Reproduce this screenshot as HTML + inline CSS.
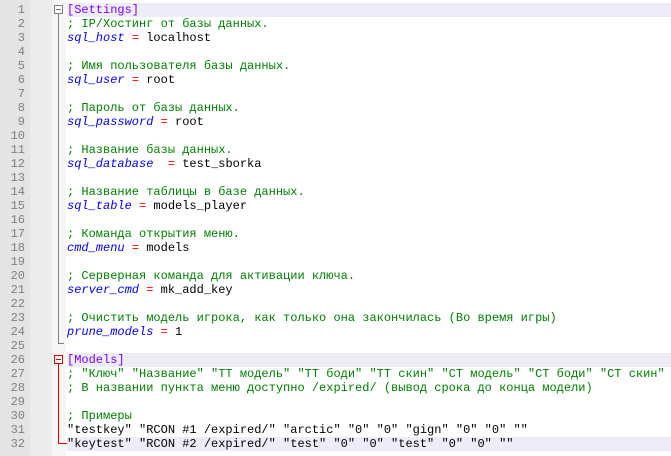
<!DOCTYPE html>
<html><head><meta charset="utf-8"><style>
body{margin:0;width:671px;height:456px;overflow:hidden;background:#fff;position:relative;font-family:"Liberation Mono","DejaVu Sans Mono",monospace;font-size:12px}
#ln{position:absolute;left:0;top:0;width:30px;height:456px;background:#e4e4e4}
#ln2{position:absolute;left:30px;top:0;width:22px;height:456px;background:#ececec}
#fm{position:absolute;left:52px;top:0;width:14px;height:456px;background:#f6f6f6}
.n{position:absolute;left:0;width:25px;text-align:right;color:#808080;height:14px;line-height:14px}
.l{position:absolute;left:67px;right:0;height:14px;line-height:14px;white-space:pre;color:#000}
.hl{background:#ededf9}
.s{color:#8000ff}.c{color:#008000}.k{color:#0000ff;font-style:italic}.e{color:#ff0000}
.box{position:absolute;left:54px;width:9px;height:9px;border:1px solid #808080;background:#fff;box-sizing:border-box}
.box:after{content:"";position:absolute;left:1px;top:3px;width:5px;height:1px;background:#808080}
.box.r{border-color:#e00000}.box.r:after{background:#e00000}
.vl{position:absolute;left:58px;width:1px;background:#808080}
</style></head><body>
<div id="ln"></div><div id="ln2"></div><div id="fm"></div>
<div class="l hl" style="top:3px"><span class="s">[Settings]</span></div>
<div class="l" style="top:17px"><span class="c">; IP/Хостинг от базы данных.</span></div>
<div class="l" style="top:31px"><span class="k">sql_host</span> <span class="e">=</span> localhost</div>
<div class="l" style="top:59px"><span class="c">; Имя пользователя базы данных.</span></div>
<div class="l" style="top:73px"><span class="k">sql_user</span> <span class="e">=</span> root</div>
<div class="l" style="top:101px"><span class="c">; Пароль от базы данных.</span></div>
<div class="l" style="top:115px"><span class="k">sql_password</span> <span class="e">=</span> root</div>
<div class="l" style="top:143px"><span class="c">; Название базы данных.</span></div>
<div class="l" style="top:157px"><span class="k">sql_database</span>  <span class="e">=</span> test_sborka</div>
<div class="l" style="top:185px"><span class="c">; Название таблицы в базе данных.</span></div>
<div class="l" style="top:199px"><span class="k">sql_table</span> <span class="e">=</span> models_player</div>
<div class="l" style="top:227px"><span class="c">; Команда открытия меню.</span></div>
<div class="l" style="top:241px"><span class="k">cmd_menu</span> <span class="e">=</span> models</div>
<div class="l" style="top:269px"><span class="c">; Серверная команда для активации ключа.</span></div>
<div class="l" style="top:283px"><span class="k">server_cmd</span> <span class="e">=</span> mk_add_key</div>
<div class="l" style="top:311px"><span class="c">; Очистить модель игрока, как только она закончилась (Во время игры)</span></div>
<div class="l" style="top:325px"><span class="k">prune_models</span> <span class="e">=</span> 1</div>
<div class="l hl" style="top:353px"><span class="s">[Models]</span></div>
<div class="l" style="top:367px"><span class="c">; "Ключ" "Название" "ТТ модель" "ТТ боди" "ТТ скин" "СТ модель" "СТ боди" "СТ скин"</span></div>
<div class="l" style="top:381px"><span class="c">; В названии пункта меню доступно /expired/ (вывод срока до конца модели)</span></div>
<div class="l" style="top:409px"><span class="c">; Примеры</span></div>
<div class="l" style="top:423px">"testkey" "RCON #1 /expired/" "arctic" "0" "0" "gign" "0" "0" ""</div>
<div class="l hl" style="top:437px">"keytest" "RCON #2 /expired/" "test" "0" "0" "test" "0" "0" ""</div>

<div class="vl" style="top:14px;height:330px"></div>
<div style="position:absolute;left:58px;top:343px;width:6px;height:1px;background:#808080"></div>
<div class="box" style="top:5px"></div>
<div class="vl" style="top:364px;height:80px;background:#e00000"></div>
<div style="position:absolute;left:58px;top:443px;width:9px;height:1px;background:#e00000"></div>
<div class="box r" style="top:355px"></div>

<div class="n" style="top:3px">1</div><div class="n" style="top:17px">2</div><div class="n" style="top:31px">3</div><div class="n" style="top:45px">4</div><div class="n" style="top:59px">5</div><div class="n" style="top:73px">6</div><div class="n" style="top:87px">7</div><div class="n" style="top:101px">8</div><div class="n" style="top:115px">9</div><div class="n" style="top:129px">10</div><div class="n" style="top:143px">11</div><div class="n" style="top:157px">12</div><div class="n" style="top:171px">13</div><div class="n" style="top:185px">14</div><div class="n" style="top:199px">15</div><div class="n" style="top:213px">16</div><div class="n" style="top:227px">17</div><div class="n" style="top:241px">18</div><div class="n" style="top:255px">19</div><div class="n" style="top:269px">20</div><div class="n" style="top:283px">21</div><div class="n" style="top:297px">22</div><div class="n" style="top:311px">23</div><div class="n" style="top:325px">24</div><div class="n" style="top:339px">25</div><div class="n" style="top:353px">26</div><div class="n" style="top:367px">27</div><div class="n" style="top:381px">28</div><div class="n" style="top:395px">29</div><div class="n" style="top:409px">30</div><div class="n" style="top:423px">31</div><div class="n" style="top:437px">32</div>
</body></html>
